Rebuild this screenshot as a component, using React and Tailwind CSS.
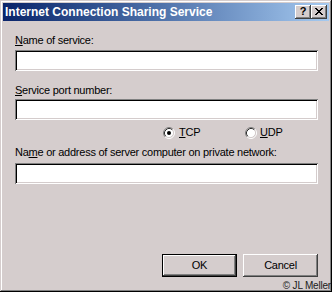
import React from "react";

const raised =
  "shadow-[inset_-1px_-1px_#404040,inset_1px_1px_#ffffff,inset_-2px_-2px_#808080,inset_2px_2px_#d4cccc]";
const sunken =
  "shadow-[inset_1px_1px_#808080,inset_-1px_-1px_#ffffff,inset_2px_2px_#000000,inset_-2px_-2px_#d4cccc]";

function Radio({ checked }) {
  return (
    <svg width="12" height="12" viewBox="0 0 12 12" className="block">
      <circle cx="6" cy="6" r="4.5" fill="#ffffff" />
      <path d="M 2.11 9.89 A 5.5 5.5 0 0 1 9.89 2.11" stroke="#808080" strokeWidth="1" fill="none" />
      <path d="M 9.89 2.11 A 5.5 5.5 0 0 1 2.11 9.89" stroke="#ffffff" strokeWidth="1" fill="none" />
      <path d="M 2.82 9.18 A 4.5 4.5 0 0 1 9.18 2.82" stroke="#303030" strokeWidth="1" fill="none" />
      <path d="M 9.18 2.82 A 4.5 4.5 0 0 1 2.82 9.18" stroke="#d4cccc" strokeWidth="1" fill="none" />
      {checked && <circle cx="6" cy="6" r="2" fill="#000000" />}
    </svg>
  );
}

function Field({ className = "" }) {
  return <div className={`h-[21px] w-full bg-white ${sunken} ${className}`} />;
}

export default function App() {
  return (
    <div
      className="relative w-[332px] h-[292px] bg-[#d5cdcd] p-[3px] flex flex-col text-black shadow-[inset_-1px_-1px_#000000,inset_1px_1px_#d5cdcd,inset_-2px_-2px_#808080,inset_2px_2px_#ffffff]"
      style={{ fontFamily: '"Liberation Sans", Arial, sans-serif' }}
    >
      {/* Title bar */}
      <div className="h-[18px] flex items-center pl-[2px] pr-[2px] bg-gradient-to-r from-[#0a246a] to-[#a6caf0]">
        <span className="flex-1 text-white font-bold text-[12px] leading-[18px] whitespace-nowrap">
          Internet Connection Sharing Service
        </span>
        <div className="flex">
          <div
            className={`w-[16px] h-[14px] bg-[#d5cdcd] flex items-center justify-center text-[11px] font-bold leading-none ${raised}`}
          >
            <span className="mt-[-1px]">?</span>
          </div>
          <div
            className={`w-[16px] h-[14px] bg-[#d5cdcd] flex items-center justify-center ${raised}`}
          >
            <svg width="8" height="7" viewBox="0 0 8 7" className="block mt-[-1px]" shapeRendering="crispEdges">
              <path d="M0 0h2v1h-2zM6 0h2v1h-2zM1 1h2v1h-2zM5 1h2v1h-2zM2 2h4v1h-4zM3 3h2v1h-2zM2 4h4v1h-4zM1 5h2v1h-2zM5 5h2v1h-2zM0 6h2v1h-2zM6 6h2v1h-2z" fill="#000" />
            </svg>
          </div>
        </div>
      </div>

      {/* Body */}
      <div className="flex-1 flex flex-col pl-[12px] pr-[11px] text-[11px] leading-[13px] tracking-[-0.25px]">
        <div className="mt-[13px] h-[13px]">
          <span className="underline underline-offset-[1px]">N</span>ame of service:
        </div>
        <Field className="mt-[3px]" />

        <div className="mt-[13px] h-[13px]">
          <span className="underline underline-offset-[1px]">S</span>ervice port number:
        </div>
        <Field className="mt-[2px]" />

        <div className="mt-[6px] h-[13px] flex items-center pl-[148px]">
          <Radio checked />
          <span className="ml-[4px] w-[66px]">
            <span className="underline underline-offset-[1px]">T</span>CP
          </span>
          <Radio />
          <span className="ml-[3px]">
            <span className="underline underline-offset-[1px]">U</span>DP
          </span>
        </div>

        <div className="mt-[7px] h-[13px] whitespace-nowrap">
          Na<span className="underline underline-offset-[1px]">m</span>e or address of server computer on private network:
        </div>
        <Field className="mt-[4px]" />

        <div className="mt-auto mb-[12px] flex justify-end gap-[6px]">
          <div className="w-[75px] h-[23px] border border-black">
            <div
              className={`w-full h-full flex items-center justify-center ${raised}`}
            >
              OK
            </div>
          </div>
          <div
            className={`w-[75px] h-[23px] flex items-center justify-center ${raised}`}
          >
            Cancel
          </div>
        </div>
      </div>

      <span className="absolute right-[1px] bottom-[1px] text-[10px] leading-[10px] tracking-[-0.2px] text-[#202020] whitespace-nowrap">
        © JL Meller
      </span>
    </div>
  );
}
